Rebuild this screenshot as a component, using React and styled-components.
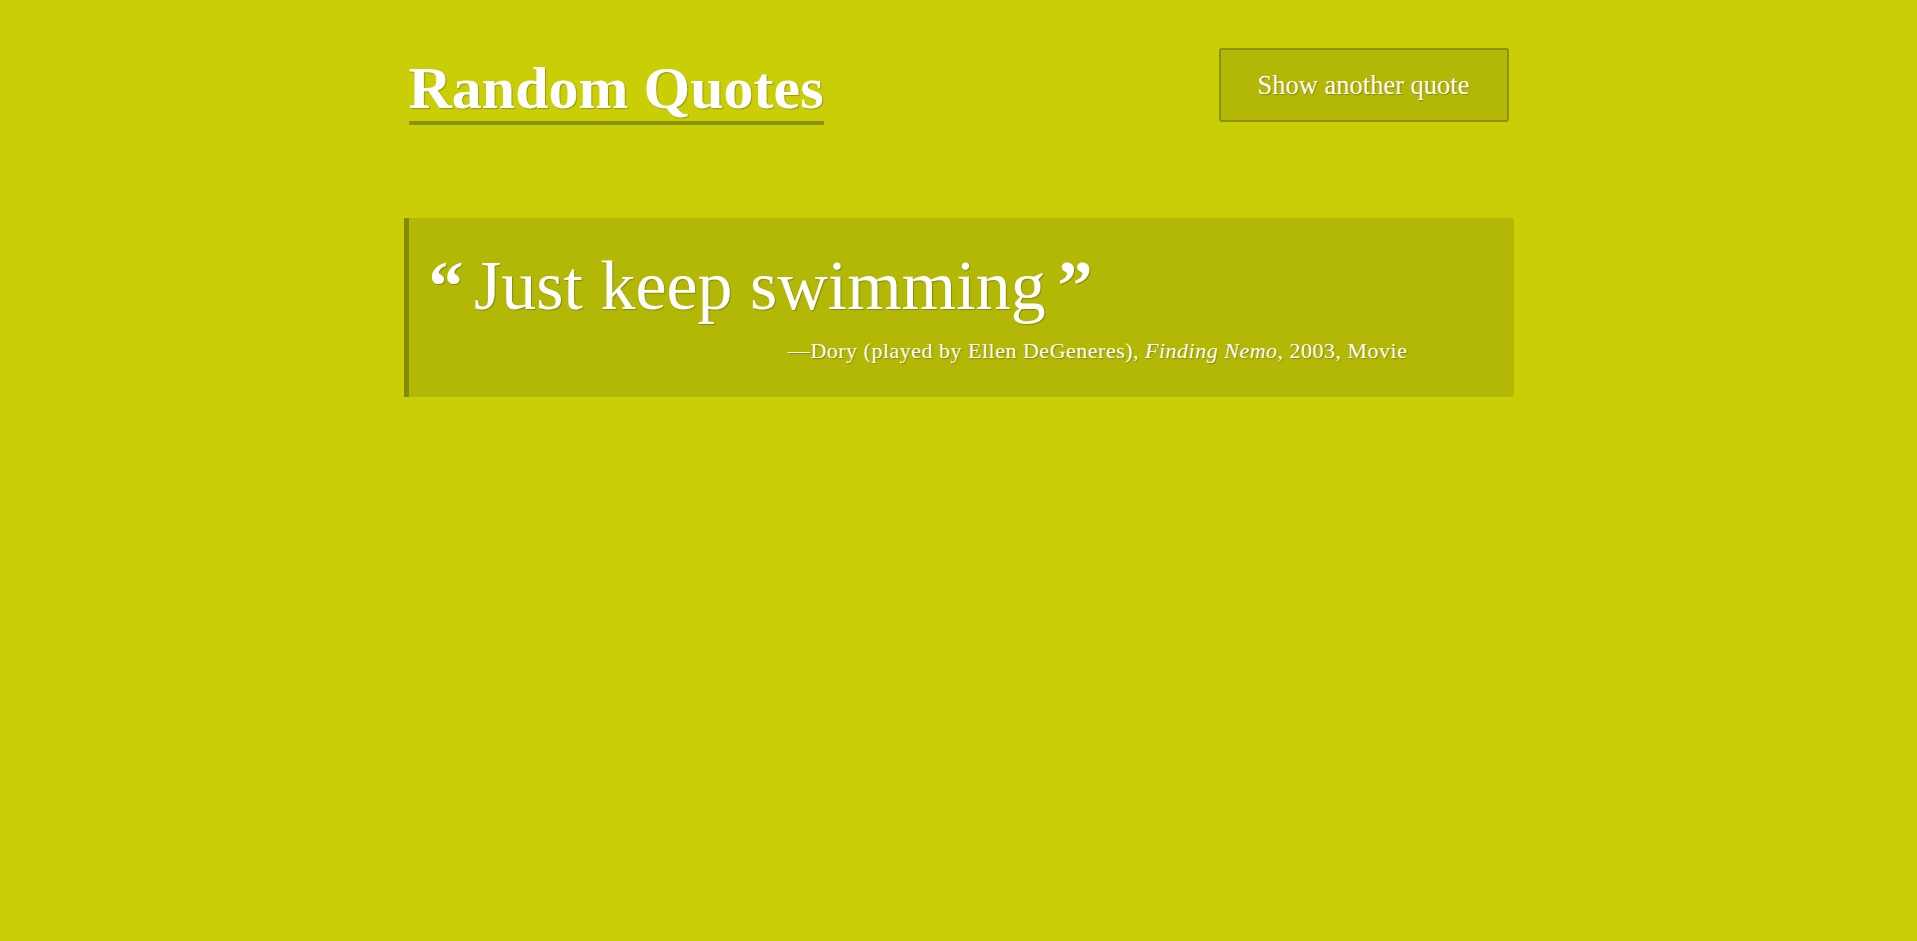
import React, { useState } from 'react';
import styled, { createGlobalStyle } from 'styled-components';

const quotes = [
  {
    text: 'Just keep swimming',
    source: 'Dory (played by Ellen DeGeneres)',
    title: 'Finding Nemo',
    year: '2003',
    kind: 'Movie',
  },
];

const GlobalStyle = createGlobalStyle`
  html, body {
    margin: 0;
    padding: 0;
    background: #c9ce06;
  }
  body {
    font-family: "Liberation Serif", "Times New Roman", serif;
    color: #fff;
    min-height: 100vh;
  }
  * {
    box-sizing: border-box;
  }
`;

const Page = styled.div`
  width: 1110px;
  margin: 0 auto;
  padding-top: 48px;
`;

const Header = styled.header`
  display: flex;
  justify-content: space-between;
  align-items: flex-start;
  padding: 0 5px;
`;

const Title = styled.h1`
  display: inline-block;
  margin: 10px 0 0;
  font-size: 60px;
  line-height: 1;
  font-weight: 700;
  padding-bottom: 3px;
  border-bottom: 4px solid #8a9400;
  text-shadow: 1px 1px 1px rgba(0, 0, 0, 0.25);
`;

const Button = styled.button`
  font-family: inherit;
  font-size: 26.5px;
  line-height: 26px;
  color: #fff;
  background: #b3b806;
  border: 2px solid #8a9400;
  border-radius: 3px;
  padding: 22px 37px;
  cursor: pointer;
  text-shadow: 1px 1px 1px rgba(0, 0, 0, 0.25);
  &:hover {
    background: #a9ae05;
  }
`;

const Quote = styled.blockquote`
  margin: 93px 0 0;
  background: #b3b806;
  border-left: 5px solid #838a04;
  border-radius: 0 3px 3px 0;
  padding: 29px 20px 33px 20px;
  text-shadow: 1px 1px 1px rgba(0, 0, 0, 0.25);
`;

const QuoteText = styled.p`
  margin: 0;
  font-size: 70px;
  line-height: 77px;
`;

const Mark = styled.span`
  font-weight: 700;
  margin: ${(p) => (p.$close ? '0 0 0 0.17em' : '0 0.15em 0 0')};
`;

const Citation = styled.p`
  margin: 14px 0 0;
  font-size: 22px;
  line-height: 26px;
  letter-spacing: 0.5px;
  text-align: right;
  padding-right: 86px;
  em {
    font-style: italic;
  }
`;

export default function App() {
  const [index, setIndex] = useState(0);
  const q = quotes[index];

  return (
    <>
      <GlobalStyle />
      <Page>
        <Header>
          <Title>Random Quotes</Title>
          <Button onClick={() => setIndex((index + 1) % quotes.length)}>
            Show another quote
          </Button>
        </Header>
        <Quote>
          <QuoteText>
            <Mark>“</Mark>{q.text}<Mark $close>”</Mark>
          </QuoteText>
          <Citation>
            —{q.source}, <em>{q.title}</em>, {q.year}, {q.kind}
          </Citation>
        </Quote>
      </Page>
    </>
  );
}
